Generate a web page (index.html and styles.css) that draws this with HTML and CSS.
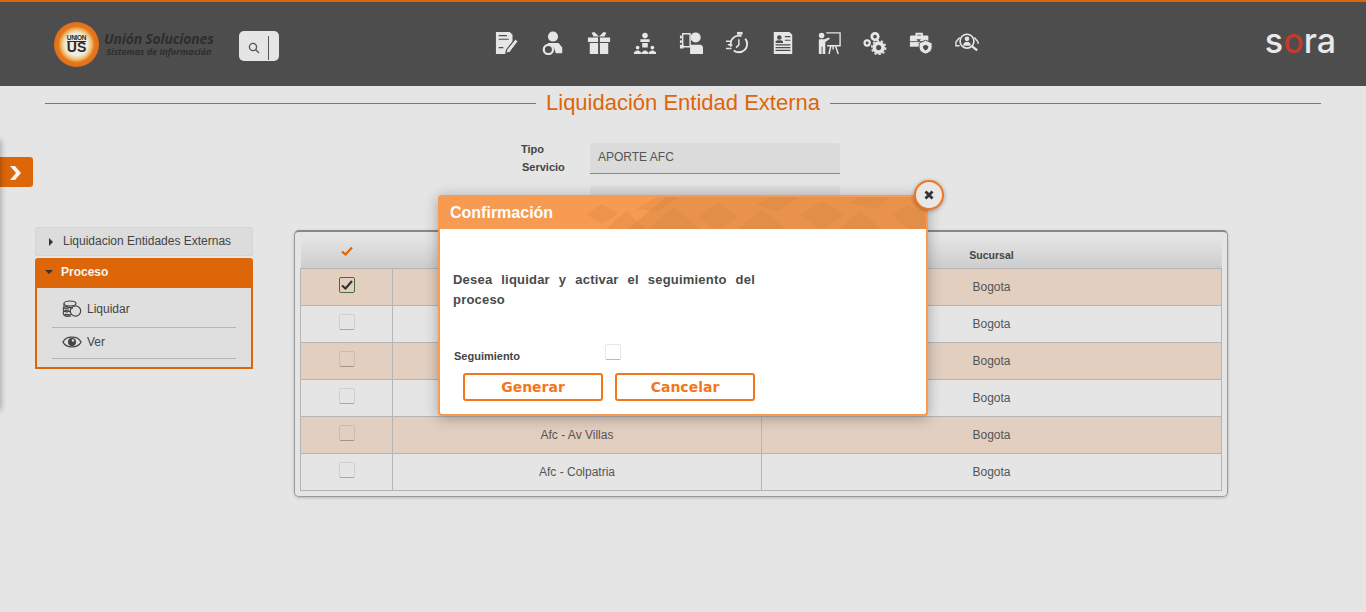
FILE: index.html
```html
<!DOCTYPE html>
<html lang="es">
<head>
    <meta charset="UTF-8">
    <meta name="viewport" content="width=device-width, initial-scale=1.0">
    <title>Liquidación Entidad Externa</title>
    <link rel="stylesheet" href="styles.css">
</head>
<body>

    <header class="topbar">
        <div class="brand">
            <div class="brand-logo"><span class="brand-small">UNION</span><span class="brand-big">US</span></div>
            <div class="brand-text">
                <span class="brand-name">Unión Soluciones</span>
                <span class="brand-sub">Sistemas de Información</span>
            </div>
        </div>
        <div class="search">
            <svg width="12" height="12" viewBox="0 0 12 12"><circle cx="5" cy="5" r="3.6" fill="none" stroke="#4d5660" stroke-width="1.3"/><path d="M7.8 7.8 11 11" stroke="#7a5a3a" stroke-width="1.6"/></svg>
            <span class="search-bar"></span>
        </div>
        <nav class="modules">
            <!-- formulario con lapiz -->
            <svg class="mod" viewBox="0 0 26 26"><path d="M1 1h15l3 3v7l-7 9-1 5H1z"/><path d="M4 5h9M4 9h11M4 18h5" stroke="#4d4d4d" stroke-width="1.2"/><path d="M13 20 22 9l3 2-9 12-4 1z" stroke="#4d4d4d"/></svg>
            <!-- persona -->
            <svg class="mod" viewBox="0 0 26 26"><circle cx="13" cy="6" r="5.5"/><path d="M7 13h12l4 5v6H16l-2-6-4-2z"/><circle cx="8" cy="20" r="5" fill="none" stroke="#e6e6e6" stroke-width="2.4"/></svg>
            <!-- regalo -->
            <svg class="mod" viewBox="0 0 26 26"><path d="M1 7h11v5H1zM14 7h11v5H14zM3 13h9v12H3zM14 13h9v12H14z"/><path d="M7 6 5 2l3-1 5 5 5-5 3 1-2 4z"/></svg>
            <!-- reunion -->
            <svg class="mod" viewBox="0 0 26 26"><circle cx="13" cy="5" r="3"/><path d="M8 9h10v3H8zM10 13h6v5h-6z"/><path d="M1 25v-2l3-2h2l3 2v2zM9.500 25v-2l2.500-2h2l2.500 2v2zM17 25v-2l3-2h2l3 2v2z"/><circle cx="5" cy="18" r="2"/><circle cx="21" cy="18" r="2"/></svg>
            <!-- persona con tablero -->
            <svg class="mod" viewBox="0 0 26 26"><circle cx="18" cy="7" r="5.500"/><path d="M12 15h12l2 2v8H12z"/><path d="M4 3h8v14H4z" fill="none" stroke="#e6e6e6" stroke-width="1.500"/><path d="M1 5h2v3H1zM1 10h2v3H1zM1 15h4v4H1z"/></svg>
            <!-- cronometro -->
            <svg class="mod" viewBox="0 0 26 26"><circle cx="15" cy="14" r="9" fill="none" stroke="#e6e6e6" stroke-width="2" stroke-dasharray="20 5"/><path d="M13 1h6v3h-6z"/><path d="M15 9v6l-3 3M1 11h6M3 15h5M1 19h6" fill="none" stroke="#e6e6e6" stroke-width="1.600"/></svg>
            <!-- hoja de vida -->
            <svg class="mod" viewBox="0 0 26 26"><path d="M3 1h17l3 3v21H3z"/><circle cx="9" cy="7" r="2.500" fill="#4d4d4d"/><path d="M5 13v-2l2-1h4l2 1v2z" fill="#4d4d4d"/><path d="M15 6h6M15 10h6M5 15h16M5 18h16M5 21h16" stroke="#4d4d4d" stroke-width="1.300"/></svg>
            <!-- presentacion -->
            <svg class="mod" viewBox="0 0 26 26"><circle cx="5" cy="5" r="3"/><path d="M2 9h6l5-2 1 1.500L9 12v13H6v-8H5v8H2z"/><path d="M10 2h15v14H11" fill="none" stroke="#e6e6e6" stroke-width="1.500"/><path d="M15 16l-2 9M20 16l3 9M17.500 16v4" fill="none" stroke="#e6e6e6" stroke-width="1.600"/></svg>
            <!-- engranajes -->
            <svg class="mod" viewBox="0 0 26 26"><circle cx="13" cy="6" r="3.500" fill="none" stroke="#e6e6e6" stroke-width="3"/><circle cx="4.500" cy="13" r="2.800" fill="none" stroke="#e6e6e6" stroke-width="2.400"/><circle cx="17" cy="18" r="4.800" fill="none" stroke="#e6e6e6" stroke-width="4"/><circle cx="17" cy="18" r="7.500" fill="none" stroke="#e6e6e6" stroke-width="1.800" stroke-dasharray="2.500 2.200"/></svg>
            <!-- maletin con escudo -->
            <svg class="mod" viewBox="0 0 26 26"><path d="M7 5V2h8v3h5l1 1v5H1V6l1-1zM9 5h4V4H9z" fill-rule="evenodd"/><path d="M1 12h13v5H1z"/><path d="M8 9h5l-2.500 3z" fill="#4d4d4d"/><path d="M18 10l7 3v5c0 4-4 6-7 7-3-1-7-3-7-7v-5z" stroke="#4d4d4d"/><path d="M18 15l3 1.500c0 3-2 4-3 4.500-1-.5-3-1.500-3-4.500z" fill="#4d4d4d"/></svg>
            <!-- busqueda de personas -->
            <svg class="mod" viewBox="0 0 26 26"><circle cx="13" cy="11" r="7.500" fill="none" stroke="#e6e6e6" stroke-width="1.800"/><circle cx="13" cy="8.500" r="2.500"/><path d="M9 16v-2l2-2h4l2 2v2z"/><path d="M5 7 1 12v4h4M21 7l4 5v2" fill="none" stroke="#e6e6e6" stroke-width="1.500"/><path d="M18 16l6 5" stroke="#e6e6e6" stroke-width="2.500"/></svg>
        </nav>
        <div class="sora">s<span class="sora-o">o</span>ra</div>
    </header>

    <div class="side-tab">
        <svg width="14" height="16" viewBox="0 0 14 16"><path d="M1 1h5l6 7-6 7H1l6-7z" fill="#f4f4f4"/></svg>
    </div>
    <div class="side-shadow"></div>

    <h1 class="page-title"><span>Liquidación Entidad Externa</span></h1>

    <form class="filters">
        <div class="filter-row">
            <label class="filter-label"><span>Tipo</span><span class="indent">Servicio</span></label>
            <div class="field">APORTE AFC</div>
        </div>
        <div class="filter-row">
            <label class="filter-label"></label>
            <div class="field">SUCURSAL</div>
        </div>
    </form>

    <main class="content">
        <aside class="menu">
            <div class="menu-head"><span class="arrow-right"></span>Liquidacion Entidades Externas</div>
            <div class="menu-group">
                <div class="menu-group-head"><span class="arrow-down"></span>Proceso</div>
                <ul class="menu-list">
                    <li>
                        <svg width="20" height="18" viewBox="0 0 20 18"><g fill="none" stroke="#444" stroke-width="1.200"><ellipse cx="8" cy="3.500" rx="6" ry="2.500"/><path d="M2 3.500V7c0 1 2 2 5 2M2 7c-1 1-1 3 0 4 1 .8 2 1 4 1.200M2 11c-1 1-1 3 0 4 1.500 1.500 5 1.500 7 1"/><circle cx="13.500" cy="11" r="5.200" fill="#ddd"/></g><path d="M3 6.500 11 8M2.500 10.500 8 11.500M2.500 14.500 9 15" stroke="#444" stroke-width="1.500"/></svg>
                        Liquidar
                    </li>
                    <li>
                        <svg width="20" height="12" viewBox="0 0 20 12"><path d="M1 6c3-6.500 15-6.500 18 0-3 6.500-15 6.500-18 0z" fill="none" stroke="#444" stroke-width="1.300"/><circle cx="10" cy="6" r="4" fill="#444"/><circle cx="11" cy="4.500" r="1.200" fill="#ddd"/></svg>
                        Ver
                    </li>
                </ul>
            </div>
        </aside>

        <section class="grid-panel">
            <table class="grid">
                <thead>
                    <tr>
                        <th class="col-check"><svg class="head-check" width="12" height="10" viewBox="0 0 12 10"><path d="M1 5.500 4.500 8.500 11 1.500" fill="none" stroke="#dd6608" stroke-width="2.200"/></svg></th>
                        <th class="col-name"></th>
                        <th>Sucursal</th>
                    </tr>
                </thead>
                <tbody>
                    <tr>
                        <td><span class="box checked"><svg width="12" height="10" viewBox="0 0 12 10"><path d="M1 5.500 4.500 8.500 11 1" fill="none" stroke="#333" stroke-width="2.200"/></svg></span></td>
                        <td></td>
                        <td>Bogota</td>
                    </tr>
                    <tr><td><span class="box"></span></td><td></td><td>Bogota</td></tr>
                    <tr><td><span class="box"></span></td><td></td><td>Bogota</td></tr>
                    <tr><td><span class="box"></span></td><td></td><td>Bogota</td></tr>
                    <tr><td><span class="box"></span></td><td>Afc - Av Villas</td><td>Bogota</td></tr>
                    <tr><td><span class="box"></span></td><td>Afc - Colpatria</td><td>Bogota</td></tr>
                </tbody>
            </table>
        </section>
    </main>

    <div class="modal">
        <div class="modal-head">
            <svg class="modal-pattern" width="340" height="32" viewBox="0 0 340 32">
                <path d="M0 17 16 7l16 10-16 10zM18 34l22-20 22 20zM50 12 72 0h22L72 14zM60 34l28-24 28 24zM112 20l20-14 20 14-20 14zM150 34l26-22 26 22zM170 8l14-8h30l-22 14zM214 18l22-14 22 14-22 16zM250 34l24-20 24 20zM262 6l12-6h30l-14 12zM306 18l16-10 18 10v16h-16z" fill="#c9803f" opacity="0.22"/>
                <path d="M0 0h340v34H40L80 0z" fill="#c9803f" opacity="0.3"/>
            </svg>
            <span>Confirmación</span>
        </div>
        <div class="modal-body">
            <p class="modal-text">Desea liquidar y activar el seguimiento del proceso</p>
            <div class="modal-check">
                <span class="modal-label">Seguimiento</span>
                <span class="box modal-box"></span>
            </div>
            <div class="modal-actions">
                <button type="button" class="btn">Generar</button>
                <button type="button" class="btn">Cancelar</button>
            </div>
        </div>
        <div class="modal-close">
            <svg width="10" height="10" viewBox="0 0 10 10"><path d="M1.500 1.500 8.500 8.500M8.500 1.500 1.500 8.500" stroke="#333" stroke-width="2.800"/></svg>
        </div>
    </div>

</body>
</html>
```

FILE: styles.css
```css
* {
    box-sizing: border-box;
}

html, body {
    height: 100%;
}

body {
    margin: 0;
    background-color: #e5e5e5;
    font-family: "Liberation Sans", Arial, sans-serif;
    color: #444;
    overflow: hidden;
    position: relative;
}

/* barra superior */
.topbar {
    height: 86px;
    background-color: #4d4d4d;
    border-top: 2px solid #dd6608;
    display: flex;
    align-items: center;
    position: relative;
}

.brand {
    display: flex;
    align-items: center;
    margin-left: 54px;
    width: 185px;
}

.brand-logo {
    width: 45px;
    height: 45px;
    flex: none;
    border-radius: 50%;
    background: radial-gradient(circle closest-side, #f1ece0 0 48%, #eed49c 60%, #eda451 72%, #e8761c 80%, #e07018 100%);
    display: flex;
    flex-direction: column;
    align-items: center;
    justify-content: center;
    line-height: 1;
    color: #2a2a2a;
    font-weight: bold;
}

.brand-small {
    font-size: 6.500px;
    letter-spacing: -0.3px;
    border-bottom: 1px solid #2a2a2a;
}

.brand-big {
    font-size: 14px;
    line-height: 11px;
}

.brand-text {
    display: flex;
    flex-direction: column;
    align-items: center;
    margin-left: 5px;
    font-family: "Open Sans", sans-serif;
    font-style: italic;
    font-weight: 700;
    color: #2e2e2e;
    white-space: nowrap;
}

.brand-name {
    font-size: 14px;
    line-height: 15px;
    letter-spacing: -0.2px;
}

.brand-sub {
    font-size: 9px;
    line-height: 11px;
}

.search {
    width: 40px;
    height: 30px;
    margin-top: 3px;
    background-color: #e5e5e5;
    border-radius: 5px;
    display: flex;
    align-items: center;
    padding: 4px 0 0 9px;
    gap: 8px;
}

.search-bar {
    width: 1px;
    height: 24px;
    background-color: #555;
}

.modules {
    display: flex;
    gap: 22px;
    margin: 0 0 2px 216px;
}

.mod {
    width: 24px;
    height: 24px;
    fill: #e6e6e6;
    display: block;
}

.sora {
    margin-left: auto;
    margin-right: 30px;
    font-family: "Inter", sans-serif;
    font-size: 34px;
    font-weight: 500;
    line-height: 30px;
    color: #e8e8e8;
    padding-bottom: 6px;
}

.sora-o {
    color: #c7392d;
}

.side-tab {
    position: absolute;
    left: 0;
    top: 157px;
    width: 33px;
    height: 30px;
    background-color: #dd6608;
    border-radius: 0 3px 3px 0;
    display: flex;
    align-items: center;
    padding: 2px 0 0 9px;
}

.side-shadow {
    position: absolute;
    left: -4px;
    top: 140px;
    width: 4px;
    height: 270px;
    box-shadow: 0 0 6px rgba(0, 0, 0, 0.45);
}

/* titulo */
.page-title {
    margin: 4px 45px 0;
    height: 26px;
    font-size: 22px;
    font-weight: normal;
    color: #dd6608;
    display: flex;
    align-items: center;
    gap: 10px;
    white-space: nowrap;
}

.page-title::before,
.page-title::after {
    content: "";
    flex: 1;
    height: 1px;
    background-color: #777;
}

/* filtros */
.filters {
    margin-top: 27px;
    height: 85px;
    padding-left: 521px;
}

.filter-row {
    display: flex;
    height: 43px;
}

.filter-label {
    width: 69px;
    margin-top: -3px;
    font-size: 11px;
    font-weight: bold;
    color: #444;
    line-height: 18px;
    display: flex;
    flex-direction: column;
}

.indent {
    margin-left: 1px;
}

.field {
    width: 250px;
    height: 31px;
    background-color: #dbdbdb;
    border-bottom: 1px solid #888;
    border-radius: 3px 3px 0 0;
    padding-left: 8px;
    font-size: 12px;
    line-height: 28px;
    color: #555;
}

/* contenido */
.content {
    display: flex;
    align-items: flex-start;
    padding-left: 35px;
}

.menu {
    width: 218px;
    margin-top: -1px;
    font-size: 12px;
}

.menu-head {
    height: 29px;
    background-color: #dcdcdc;
    border: 1px solid #d4d4d4;
    border-radius: 3px 3px 0 0;
    display: flex;
    align-items: center;
    padding: 0 0 2px 13px;
    color: #444;
}

.arrow-right {
    width: 0;
    height: 0;
    border-left: 4px solid #333;
    border-top: 4px solid transparent;
    border-bottom: 4px solid transparent;
    margin: 3px 10px 0 0;
}

.menu-group {
    margin-top: 2px;
    border: 2px solid #dd6608;
    background-color: #dfdfdf;
    border-radius: 3px 3px 0 0;
}

.menu-group-head {
    height: 29px;
    margin: -1px -1px 0;
    background-color: #dd6608;
    color: #f4f4f4;
    font-weight: bold;
    display: flex;
    align-items: center;
    padding: 0 0 3px 9px;
}

.arrow-down {
    width: 0;
    height: 0;
    border-top: 4px solid #333;
    border-left: 4px solid transparent;
    border-right: 4px solid transparent;
    margin-right: 8px;
}

.menu-list {
    list-style: none;
    margin: 0;
    padding: 8px 15px 8px;
}

.menu-list li {
    height: 31px;
    border-bottom: 1px solid #b5b5b5;
    display: flex;
    align-items: center;
    padding: 0 0 3px 10px;
    gap: 5px;
}

.menu-list li:first-child {
    height: 32px;
    padding-bottom: 5px;
}

.grid-panel {
    margin-left: 41px;
    margin-top: 2px;
    width: 934px;
    height: 267px;
    border: 1px solid #999;
    border-top: 2px solid #888;
    border-radius: 5px;
    box-shadow: 0 1px 3px rgba(0, 0, 0, 0.2);
    padding: 5px 4px 5px 5px;
}

.grid {
    width: 922px;
    border-collapse: collapse;
    table-layout: fixed;
    font-size: 12px;
}

.grid th {
    height: 31px;
    background: linear-gradient(#e5e5e5, #cdcdcd);
    font-size: 10.500px;
    padding: 5px 0 0;
    color: #444;
}

.head-check {
    display: block;
    margin: -7px auto 0;
}

.col-check {
    width: 92px;
}

.col-name {
    width: 369px;
}

.grid td {
    height: 37px;
    border: 1px solid #b5b5b5;
    text-align: center;
    vertical-align: middle;
    padding: 0;
    color: #555;
}

.grid tbody tr:nth-child(odd) td {
    background-color: #e2cfc0;
}

.box {
    display: inline-flex;
    align-items: center;
    justify-content: center;
    width: 16px;
    height: 16px;
    border: 1px solid rgba(0, 0, 0, 0.09);
    border-bottom: 1px solid rgba(0, 0, 0, 0.28);
    border-radius: 2px;
    vertical-align: middle;
    margin-bottom: 3px;
}

.box.checked {
    border: 1px solid #4b6b3c;
}

/* ventana de confirmacion */
.modal {
    position: absolute;
    left: 438px;
    top: 195px;
    width: 490px;
    height: 221px;
    background-color: #fff;
    border: 2px solid #f79a52;
    border-radius: 4px;
    box-shadow: 0 2px 14px rgba(0, 0, 0, 0.3);
}

.modal-head {
    height: 32px;
    background-color: #f79a52;
    color: #fff;
    font-size: 16px;
    font-weight: bold;
    line-height: 32px;
    padding-left: 10px;
    position: relative;
    overflow: hidden;
}

.modal-head span {
    position: relative;
}

.modal-pattern {
    position: absolute;
    right: 0;
    top: 0;
}

.modal-body {
    padding: 0 13px;
}

.modal-text {
    margin: 41px 0 0;
    width: 302px;
    font-size: 13px;
    font-weight: bold;
    line-height: 20px;
    text-align: justify;
    letter-spacing: 0.2px;
    color: #4a4a4a;
}

.modal-check {
    display: flex;
    align-items: center;
    margin-top: 34px;
    height: 20px;
    padding-left: 1px;
}

.modal-label {
    width: 151px;
    font-size: 11px;
    font-weight: bold;
    margin-top: 4px;
    color: #444;
}

.modal-box {
    background-color: #fff;
    margin-bottom: 4px;
}

.modal-actions {
    display: flex;
    gap: 12px;
    margin: 9px 0 0 10px;
}

.btn {
    width: 140px;
    height: 28px;
    background-color: #fff;
    border: 2px solid #f4761b;
    border-radius: 3px;
    color: #f4761b;
    font-family: "DejaVu Sans", sans-serif;
    font-size: 14px;
    font-weight: bold;
    cursor: pointer;
}

.modal-close {
    position: absolute;
    right: -18px;
    top: -17px;
    width: 30px;
    height: 30px;
    border: 2px solid #f4761b;
    border-radius: 50%;
    background-color: #e8e8e8;
    box-shadow: 0 1px 4px rgba(0, 0, 0, 0.35);
    display: flex;
    align-items: center;
    justify-content: center;
}
```
